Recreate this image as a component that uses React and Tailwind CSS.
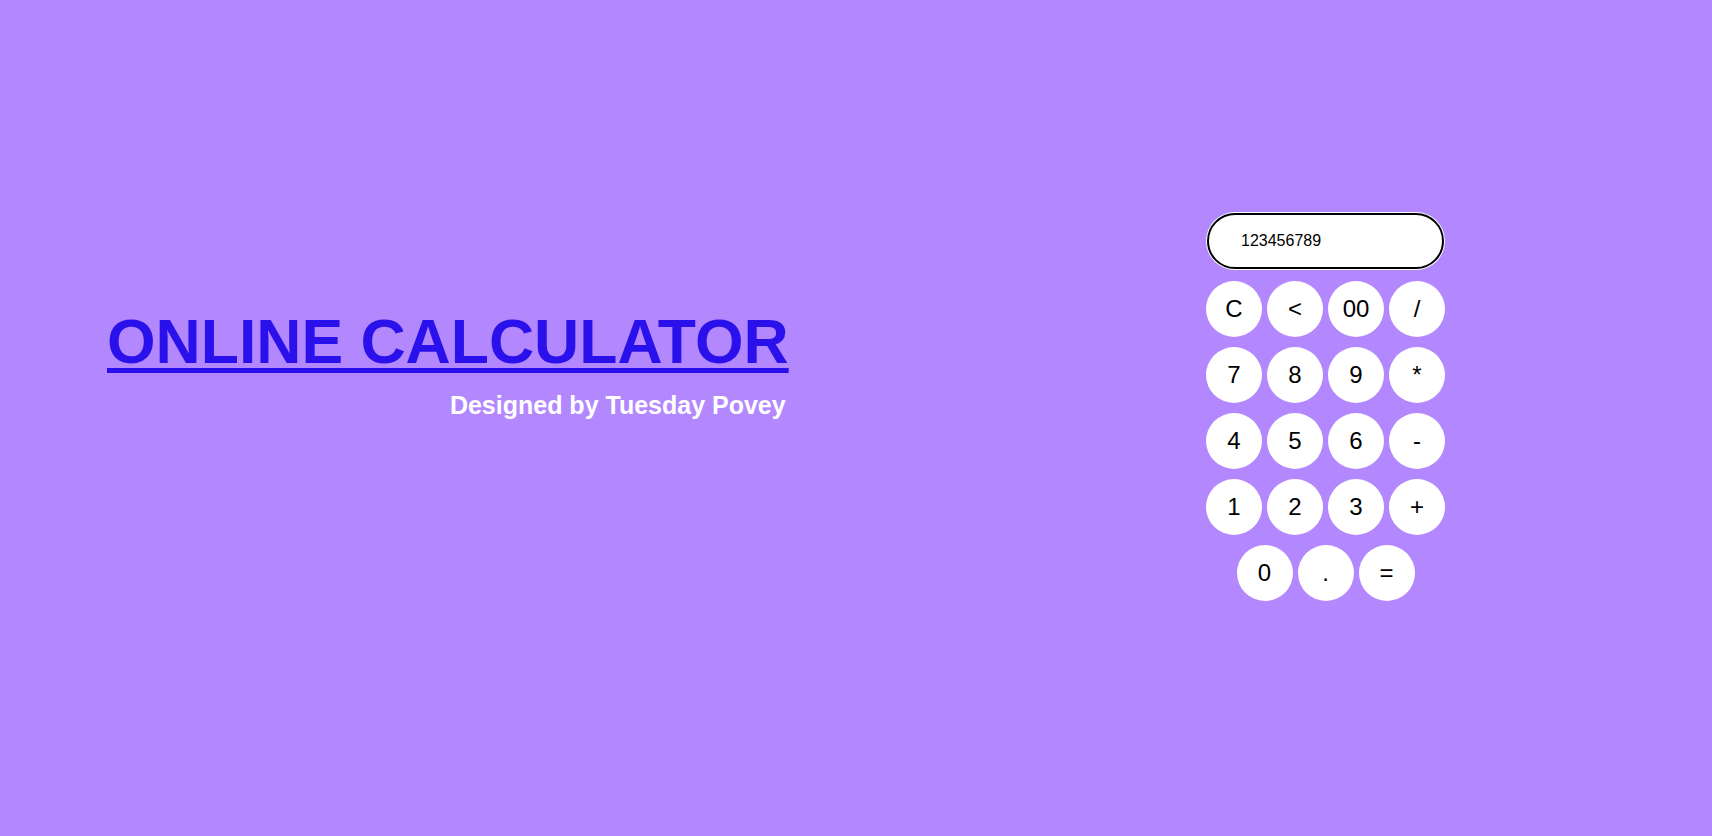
import React from "react";

const rows = [
  ["C", "<", "00", "/"],
  ["7", "8", "9", "*"],
  ["4", "5", "6", "-"],
  ["1", "2", "3", "+"],
  ["0", ".", "="],
];

export default function App() {
  return (
    <div
      className="w-full h-[836px] bg-[#b388ff] flex items-start overflow-hidden"
      style={{ fontFamily: '"Liberation Sans", Arial, sans-serif' }}
    >
      <div className="ml-[107px] mt-[305px] flex flex-col items-end">
        <h1 className="text-[62.5px] leading-[72px] font-bold text-[#2a10ea] underline decoration-[5px] underline-offset-[5px] whitespace-nowrap">
          ONLINE CALCULATOR
        </h1>
        <p className="mt-[14px] pr-[3px] text-[25px] leading-[29px] font-bold text-white whitespace-nowrap">
          Designed by Tuesday Povey
        </p>
      </div>

      <div className="ml-auto mr-[267px] mt-[213px] w-[239px] flex flex-col items-center">
        <div className="w-[237px] h-[56px] rounded-full bg-white border-2 border-black shadow-[0_0_0_1px_#ffffff] flex items-center pl-[32px] text-[16px] text-black">
          123456789
        </div>
        <div className="mt-[12px] flex flex-col gap-[10px]">
          {rows.map((row, i) => (
            <div key={i} className="flex justify-center gap-[5px]">
              {row.map((k) => (
                <button
                  key={k}
                  className="w-[56px] h-[56px] rounded-full bg-white text-black text-[24px] flex items-center justify-center"
                >
                  {k}
                </button>
              ))}
            </div>
          ))}
        </div>
      </div>
    </div>
  );
}
